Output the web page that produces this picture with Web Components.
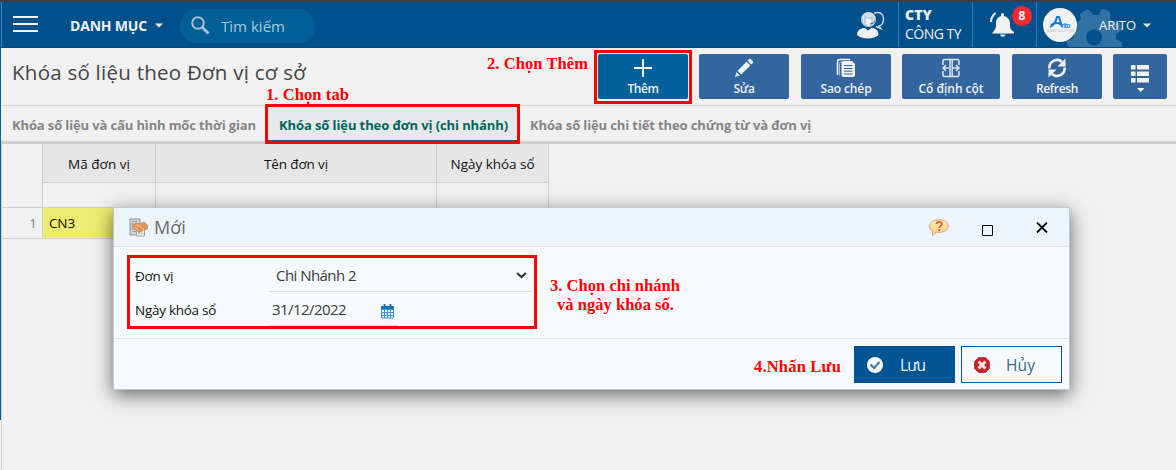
<!DOCTYPE html>
<html lang="vi">
<head>
<meta charset="utf-8">
<title>Khóa số liệu</title>
<style>
html,body{margin:0;height:100%;background:#f1f1f1;overflow:hidden}
</style>
</head>
<body>
<lock-page></lock-page>
<script>
const define = (name, html, ready) => customElements.define(name, class extends HTMLElement {
  connectedCallback() {
    if (this.shadowRoot) return;
    this.attachShadow({ mode: 'open' }).innerHTML = html;
    if (ready) ready(this);
  }
});

/* Text set to an exact width by distributing the difference over its letters. */
define('fit-label', `<style>:host{display:block;flex:none;white-space:nowrap;line-height:20px}span{display:inline-block;white-space:pre}</style><span><slot></slot></span>`, el => {
  const w = +el.getAttribute('w'), s = el.shadowRoot.querySelector('span');
  const n = [...el.textContent].length;
  el.style.width = w + 'px';
  s.style.letterSpacing = ((w - s.getBoundingClientRect().width) / n).toFixed(4) + 'px';
});

define('top-bar', `<style>
:host{display:flex;height:45px;border-top:2px solid #3c3d49;border-bottom:1px solid #004a80;border-left:1px solid #004f8a;box-sizing:content-box;background:#00508b;color:#f1f1f1;align-items:center;overflow:hidden}
svg{display:block;flex:none}
.edge{width:1px;height:100%;background:#4c85af;margin-right:11px}
.menu{display:grid;gap:5px;width:25px;margin-top:-1px}.menu i{height:2px;background:#f1f1f1}
.danh{margin-left:32px;font-size:14px;font-weight:700;margin-top:3px}
.search{display:flex;align-items:center;width:135px;height:34px;border-radius:17px;background:#005f97;margin-left:17px;box-sizing:border-box;padding-left:11px;color:#a5c9dd;font-size:15px;margin-top:2px}
.search fit-label{margin-left:11px;margin-top:1px}
.grow{flex:1}
.cell{height:100%;border-left:1px solid #3f7aaa;box-sizing:border-box;display:flex}
.co{width:74px;padding:3px 0 0 6px;flex-direction:column;font-size:14px}
.bell{width:64px;position:relative}
.bell svg{margin:8px 0 0 17px}
.badge{position:absolute;left:39px;top:4px;width:20px;height:20px;border-radius:50%;background:#f22b31;text-align:center;font-size:12px;font-weight:700;line-height:20px}
.user{width:140px;position:relative;align-items:center}
.gear{position:absolute;left:29px;top:6px}
.ava{margin-left:6px;position:relative}
.user fit-label{position:relative;margin:1px 7px 0 22px;font-size:13px}
.user .c{position:relative;margin-top:2px}
</style>
<div class="edge"></div><div class="menu"><i></i><i></i><i></i></div>
<fit-label class="danh" w="77">DANH MỤC</fit-label>
<svg width="8" height="5" style="margin:1px 0 0 8px"><path d="M0 .5h8L4 4.5z" fill="#f1f1f1"/></svg>
<div class="search"><svg width="19" height="19" viewBox="0 0 19 19" fill="none" stroke="#a5c3d7"><circle cx="7" cy="7" r="5.8" stroke-width="2"/><path d="M11.5 11.5l6 6" stroke-width="2.8"/></svg><fit-label w="64">Tìm kiếm</fit-label></div>
<div class="grow"></div>
<svg width="28" height="28" viewBox="0 0 28 28" style="margin:1px 13px 0 0"><path d="M17 2.2c6-2 10 1 9.500 6.500-.2 3.500-2.500 5.800-4.500 6.300l1.800 2.500-5-2" fill="none" stroke="#c6d8e5" stroke-width="1.500"/><circle cx="11.500" cy="8.500" r="7.500" fill="#d3e0ea"/><path d="M8 5.500c2 2 5 2 7 1v3c0 4-1.500 6-3.500 6S8 13 8 10z" fill="#f1f1f1" stroke="#7fa6c4" stroke-width=".7"/><path d="M5 7v5M18 7v5" stroke="#87abc7" stroke-width="1"/><path d="M13 13q4 0 5-3" fill="none" stroke="#00508b" stroke-width=".8"/><path d="M0 24c0-6 5-7 8-7l3 2.500 3.500-2.500c4 0 7 2 7 7-4 4.500-17 4.500-21.500 0" fill="#f1f1f1"/></svg>
<div class="cell co"><fit-label w="27" style="font-weight:800;line-height:19px">CTY</fit-label><fit-label w="56">CÔNG TY</fit-label></div>
<div class="cell bell"><svg width="26" height="28" viewBox="0 0 26 28"><path d="M3 22c3-3 3-5 3-9 0-4 2-6 5-7V4.500a1.500 1.500 0 0 1 3 0V6c4 1 6 4 6 8 0 4 0 5 4 8v1.500H2z" fill="#f1f1f1"/><path d="M10 24.500h5.500a2.800 2.800 0 0 1-5.500 0" fill="#f1f1f1"/><path d="M1 12c0-4 2-7 4.500-9" fill="none" stroke="#f1f1f1" stroke-width="2"/></svg><span class="badge">8</span></div>
<div class="cell user"><svg class="gear" width="56" height="42" viewBox="0 0 56 42"><path fill="#3272a2" fill-rule="evenodd" d="M14 6l6-4q2-2 4 1l3 4h6l2-5 2-1 6 2 1 2v6l4 4h6l2 7-6 4v5l7 4-2 7H4L0 33l8-3V25L1 21l3-8 8 1 3-3zM28 21.500a8 8 0 1 0 .1 0z"/></svg>
<svg class="ava" width="34" height="34" viewBox="0 0 34 34"><circle cx="17" cy="17" r="17" fill="#f1f1f1"/><path d="M7 19Q12 17 14 9h2l3 10M8 17q6-4 11 0" fill="none" stroke="#1679d5" stroke-width="2"/><text x="18" y="19.500" font-family="Open Sans" font-size="6.500" font-weight="700" textLength="9.500" fill="#2a8bd9">rito</text><text x="3" y="24" font-family="Open Sans" font-size="3.500" textLength="28" fill="#b9bdc0">SMART SOLUTION</text></svg>
<fit-label w="37">ARITO</fit-label><svg class="c" width="8" height="5"><path d="M0 .5h8L4 4.500z" fill="#f1f1f1"/></svg></div>`);

define('tool-button', `<style>
:host{display:flex;flex-direction:column;align-items:center;width:90px;height:45px;box-sizing:border-box;padding-top:4px;border-radius:2px;background:#33659f;color:#f1f1f1;font-size:12px;font-weight:600}
:host([primary]){background:#00619b}
:host([wide]){width:98px}
:host([small]){width:54px;padding-top:10px}
</style><slot></slot>`);

define('title-bar', `<style>
:host{display:flex;height:57px;border-bottom:1px solid #d0d0d0;padding:0 9px 0 11px;box-sizing:content-box;color:#444}
.t{font-size:20.500px;margin-top:14px}
.g{flex:1}.b{display:flex;margin-top:6px}
tool-button{margin-left:11px}tool-button.w{margin-left:12px}
svg{display:block;flex:none}
tool-button fit-label{margin-top:2px;line-height:18px}
</style>
<fit-label class="t" w="294">Khóa số liệu theo Đơn vị cơ sở</fit-label><div class="g"></div>
<div class="b">
<tool-button primary><svg width="20" height="20"><path d="M10 1v18M1 10h18" stroke="#f1f1f1" stroke-width="2"/></svg><fit-label w="31">Thêm</fit-label></tool-button>
<tool-button><svg width="20" height="20" viewBox="0 0 20 20" fill="#f1f1f1"><path d="M1 19l1.500-5 3.500 3.500zM3.500 12.700l9-9 3.800 3.800-9 9zM13.500 2.700l1.600-1.600q.8-.6 1.600 0l2.200 2.200q.7.800 0 1.600l-1.600 1.600z"/></svg><fit-label w="21">Sửa</fit-label></tool-button>
<tool-button class="w"><svg width="20" height="20" viewBox="0 0 20 20"><path d="M1.500 17V4q0-2.500 2.500-2.500h10" fill="none" stroke="#f1f1f1" stroke-width="1.600"/><path d="M3.500 17.500V5.500q0-1.500 1.500-1.500h8" fill="none" stroke="#a9bed5" stroke-width="1"/><path d="M8 3h8l3 3v11q0 2-2 2H7.500q-2 0-2-2V5q0-2 2.500-2" fill="#f1f1f1"/><path d="M8 7.500h8.500M8 10.500h8.500M8 13.200h8.500M8 16h8.500" stroke="#33659f"/></svg><fit-label w="51">Sao chép</fit-label></tool-button>
<tool-button wide><svg width="20" height="20" viewBox="0 0 20 20" fill="none" stroke="#dfe5ed" stroke-width="1.500"><path d="M2 7V3q0-1.500 1.500-1.500h13Q18 1.500 18 3v4M2 13v4q0 1.500 1.500 1.500h13q1.500 0 1.500-1.500v-4M9 2v16M11.200 2v16M8 10H2M5 7l-3 3 3 3M12 10h6M15 7l3 3-3 3"/></svg><fit-label w="65">Cố định cột</fit-label></tool-button>
<tool-button class="w"><svg width="20" height="20" viewBox="0 0 20 20"><g fill="none" stroke="#f1f1f1" stroke-width="2.600"><path d="M2.500 10.500a7.500 7.500 0 0 1 12.500-6.500"/><path d="M17.500 9.500a7.500 7.500 0 0 1-12.500 6.500"/></g><path d="M18.500.5v8h-8zM1.500 19.500v-8h8z" fill="#f1f1f1"/></svg><fit-label w="42">Refresh</fit-label></tool-button>
<tool-button small><svg width="18" height="28" viewBox="0 0 18 28" fill="#f1f1f1"><path d="M0 1h4.500v4.500H0zM6 1h12v4.500H6zM0 7.500h4.500V12H0zM6 7.500h12V12H6zM0 14h4.500v4.500H0zM6 14h12v4.500H6zM6 24h7.500l-3.700 4z"/></svg></tool-button>
</div>`);

define('tab-strip', `<style>
:host{display:flex;height:35px;border-bottom:3px solid #d0d0d0;padding-left:11px;font-size:13px;font-weight:700;color:#858585;align-items:center}
.on{align-self:stretch;background:#e6e8ea;color:#00665d;display:flex;align-items:center;width:253px;box-sizing:border-box;border-bottom:1px solid #00665d;padding-left:13px;margin:0 11px 0 10px}
fit-label{margin-top:3px}
</style><fit-label w="244">Khóa số liệu và cấu hình mốc thời gian</fit-label><div class="on"><fit-label w="229">Khóa số liệu theo đơn vị (chi nhánh)</fit-label></div><fit-label w="281">Khóa số liệu chi tiết theo chứng từ và đơn vị</fit-label>`);

define('unit-grid', `<style>
:host{display:grid;grid-template-columns:41px 113px 281px 112px;grid-template-rows:39px 25px 31px;font-size:13.500px;color:#111}
div{box-sizing:border-box;border-right:1px solid #d0d0d0;border-bottom:1px solid #d0d0d0;display:flex;align-items:center;justify-content:center}
.h{background:#e6e6e6;padding-top:1px}
.c{grid-row:span 2}
.n{justify-content:flex-end;padding-right:5px;color:#7d7d7d}
.y{background:#eeec70;justify-content:flex-start;padding-left:6px}
</style><div class="c"></div><div class="h"><fit-label w="62">Mã đơn vị</fit-label></div><div class="h"><fit-label w="64">Tên đơn vị</fit-label></div><div class="h"><fit-label w="84">Ngày khóa sổ</fit-label></div>
<div></div><div></div><div></div>
<div class="n">1</div><div class="y"><fit-label w="26">CN3</fit-label></div><div></div><div></div>`);

define('form-row', `<style>
:host{display:flex;height:34px;font-size:13.500px;color:#111}
.l{width:135px;padding-top:8px;flex:none}
.f{border-bottom:1px solid #d6dade;display:flex;width:263px;box-sizing:border-box;font-size:15px;color:#3a3a3a;padding:7px 6px 0 6px;height:34px}
:host([date]) .f{width:128px;padding-left:2px;padding-right:4px}
</style><div class="l"><slot name="label"></slot></div><div class="f"><slot></slot></div>`);

define('dialog-button', `<style>
:host{display:flex;width:101px;height:37px;box-sizing:border-box;border:1px solid #005594;align-items:center;padding-left:12px;color:#356789;font-size:15.500px}
:host([primary]){background:#005594;color:#f1f5f9}
</style><slot></slot>`);

define('edit-dialog', `<style>
:host{display:flex;flex-direction:column;width:957px;height:183px;box-sizing:border-box;border:1px solid #c4c8cb;background:#f7fbff;box-shadow:0 5px 18px rgba(0,0,0,.58)}
header{height:38px;background:#edf5fc;border-bottom:1px solid #dfe3e6;display:flex;padding-left:15px;color:#6a6a6a}
main{border-bottom:1px solid #dfe3e6;box-sizing:border-box;height:92px;padding:11px 0 0 21px}
footer{display:flex;justify-content:flex-end;gap:6px;padding:7px 7px 0 0}
svg{display:block;flex:none}
header fit-label{font-size:18px;margin:9px 0 0 6px}
.g{flex:1}
</style>
<header><svg width="19" height="19" viewBox="0 0 19 19" style="margin-top:10px"><path d="M1 1h10v16H1z" fill="#d1d6dc" stroke="#8f949b"/><path d="M1 6h10M1 11h10M3 3.500h5M3 8.500h4M3 13.500h4" stroke="#9a9fa6"/><path d="M7.500 9h8v9h-8z" fill="#f1eee6" stroke="#a1a1a1"/><path d="M10 12v4" stroke="#44a95a"/><path d="M12 12.500h2M12 15.500h2" stroke="#aaa"/><path d="M3 8l4-3 4 1 4-2 3.500 3v4l-4 1-3 2-3-1-5-3z" fill="#dc975b" stroke="#b97844" stroke-width=".6"/><path d="M7 7l4 1 4 4M5 9l4 3" fill="none" stroke="#f3be88"/></svg><fit-label w="32">Mới</fit-label><div class="g"></div>
<svg width="20" height="18" viewBox="0 0 20 18" style="margin-top:11px"><defs><linearGradient id="b" x2="0" y2="1"><stop stop-color="#fff3b9"/><stop offset="1" stop-color="#ffc97c"/></linearGradient></defs><path d="M10 .7c5.300 0 9.300 2.600 9.300 6.300s-4 6.400-9.300 6.400l-3-.3L3.500 16.800V12C1.500 11 .7 9 .7 7 .7 3.300 4.700.7 10 .7z" fill="url(#b)" stroke="#e59a83"/><path d="M7.500 5.200c0-3 5.300-3 5.300 0 0 1.900-2.600 1.700-2.600 3.800M10.200 10v1.700" fill="none" stroke="#dc5a31" stroke-width="1.800"/></svg>
<svg width="12" height="12" style="margin:17px 0 0 33px"><path d="M.5.5h10v10H.5z" fill="none" stroke="#111"/></svg>
<svg width="12" height="11" style="margin:14px 21px 0 42px"><path d="M1 .5l10 10M11 .5L1 10.500" stroke="#000" stroke-width="1.800"/></svg></header>
<main><form-row><fit-label slot="label" w="38">Đơn vị</fit-label><fit-label w="80">Chi Nhánh 2</fit-label><div class="g"></div><svg width="11" height="8" style="margin-top:7px"><path d="M1 1l4.500 4L10 1" fill="none" stroke="#333" stroke-width="2.200"/></svg></form-row>
<form-row date><fit-label slot="label" w="81">Ngày khóa sổ</fit-label><fit-label w="74">31/12/2022</fit-label><div class="g"></div><svg width="13" height="15" viewBox="0 0 13 15" style="margin-top:5px"><rect y="2" width="13" height="12.500" rx="1" fill="#3f93cf"/><path d="M0 2h13v3H0z" fill="#1476b8"/><path d="M3.500 0v4M9.500 0v4" stroke="#0d6eaf" stroke-width="1.800"/><path d="M1 6h2v2H1zM4 6h2v2H4zM7 6h2v2H7zM10 6h2v2h-2zM1 9h2v2H1zM4 9h2v2H4zM7 9h2v2H7zM10 9h2v2h-2zM1 12h2v1.500H1zM4 12h2v1.500H4zM7 12h2v1.500H7zM10 12h2v1.500h-2z" fill="#e6f3fb"/></svg></form-row></main>
<footer><dialog-button primary><svg width="16" height="16" viewBox="0 0 16 16"><circle cx="8" cy="8" r="8" fill="#f5f8fa"/><path d="M3.500 7.500L7 11l5.500-6" fill="none" stroke="#44779f" stroke-width="2"/></svg><fit-label w="25" style="margin-left:17px">Lưu</fit-label></dialog-button>
<dialog-button><svg width="16" height="16" viewBox="0 0 16 16"><path d="M4.700.3h6.600l4.400 4.400v6.600l-4.400 4.400H4.700L.3 11.300V4.700z" fill="#cd1f26" stroke="#a72a2e" stroke-width=".6"/><path d="M4.500 4.500l7 7M11.500 4.500l-7 7" stroke="#f1e7e7" stroke-width="3"/></svg><fit-label w="29" style="margin-left:16px">Hủy</fit-label></dialog-button></footer>`);

/* Tutorial callouts drawn over the interface. */
define('guide-marks', `<style>
:host{position:absolute;inset:0;pointer-events:none;color:#f00;font:700 16.500px "Liberation Serif",serif}
.r{position:absolute;box-sizing:border-box;border:3px solid #f00}
fit-label{position:absolute}
</style>
<div class="r" style="left:594px;top:50px;width:98px;height:54px"></div>
<div class="r" style="left:265px;top:104px;width:255px;height:40px"></div>
<div class="r" style="left:127px;top:255px;width:410px;height:74px"></div>
<fit-label w="101" style="left:487px;top:54px">2. Chọn Thêm</fit-label>
<fit-label w="83" style="left:266px;top:85px">1. Chọn tab</fit-label>
<fit-label w="130" style="left:550px;top:276px">3. Chọn chi nhánh</fit-label>
<fit-label w="117" style="left:557px;top:295px">và ngày khóa số.</fit-label>
<fit-label w="87" style="left:754px;top:357px">4.Nhấn Lưu</fit-label>`);

define('lock-page', `<style>
:host{display:block;position:relative;width:1176px;height:470px;overflow:hidden;background:#f1f1f1;font-family:"Open Sans","Noto Sans",sans-serif}
.p{display:flex;height:422px}
.rail{width:1px;height:372px;background:#00609b}
.c{flex:1}
.in{border-left:1px solid #d0d0d0;height:326px}
edit-dialog{position:absolute;left:113px;top:207px}
</style><top-bar></top-bar><div class="p"><div class="rail"></div><div class="c"><title-bar></title-bar><tab-strip></tab-strip><div class="in"><unit-grid></unit-grid></div></div></div><edit-dialog></edit-dialog><guide-marks></guide-marks>`);
</script>
</body>
</html>
